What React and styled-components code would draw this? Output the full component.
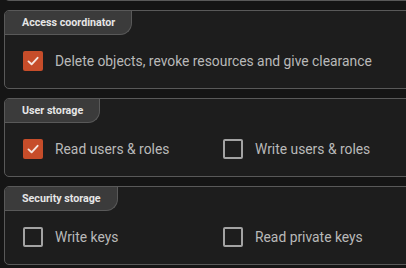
import React from "react";
import styled, { createGlobalStyle } from "styled-components";

const Global = createGlobalStyle`
  html, body {
    margin: 0;
    padding: 0;
    background: #151515;
  }
  body {
    font-family: Roboto, "Noto Sans", sans-serif;
  }
`;

const Page = styled.div`
  display: flex;
  flex-direction: column;
  gap: 9px;
  padding-left: 4px;
  overflow: hidden;
  height: 268px;
`;

const Panel = styled.section`
  width: calc(100% + 20px);
  flex: none;
  background: #1d1d1d;
  border: 1px solid #595959;
  border-radius: 5px;
  height: 77px;
  display: flex;
  flex-direction: column;
  align-items: flex-start;
  margin-top: ${(p) => (p.$hidden ? "-78px" : "0")};
`;

const Tab = styled.div`
  box-sizing: border-box;
  height: 24px;
  display: flex;
  align-items: center;
  padding: 0 16px 0 17px;
  background: #3b3b3b;
  border-right: 1px solid #595959;
  border-bottom: 1px solid #595959;
  border-top-left-radius: 4px;
  border-bottom-right-radius: 12px;
  color: #e6e6e6;
  font-size: 10.7px;
  font-weight: 700;
`;

const Options = styled.div`
  display: grid;
  grid-template-columns: repeat(${(p) => p.$cols}, 200px);
  padding: 16px 0 0 18px;
`;

const Option = styled.label`
  display: flex;
  align-items: center;
  gap: 12px;
  height: 20px;
  color: #b9b9b9;
  font-size: 13.85px;
  white-space: nowrap;
`;

const Box = styled.span`
  box-sizing: border-box;
  width: 20px;
  height: 20px;
  flex: none;
  display: flex;
  align-items: center;
  justify-content: center;
  border-radius: 2px;
  background: ${(p) => (p.$checked ? "#c64d2a" : "transparent")};
  border: ${(p) => (p.$checked ? "none" : "2px solid #a3a3a3")};
`;

const Check = ({ checked }) => (
  <Box $checked={checked}>
    {checked && (
      <svg width="14" height="14" viewBox="0 0 14 14">
        <path
          d="M2.5 7.4 L5.6 10.3 L11.6 3.8"
          fill="none"
          stroke="#f4e6e0"
          strokeWidth="1.9"
          strokeLinecap="round"
          strokeLinejoin="round"
        />
      </svg>
    )}
  </Box>
);

const groups = [
  {
    title: "Access coordinator",
    items: [{ label: "Delete objects, revoke resources and give clearance", checked: true }],
  },
  {
    title: "User storage",
    items: [
      { label: "Read users & roles", checked: true },
      { label: "Write users & roles", checked: false },
    ],
  },
  {
    title: "Security storage",
    items: [
      { label: "Write keys", checked: false },
      { label: "Read private keys", checked: false },
    ],
  },
];

export default function App() {
  return (
    <>
      <Global />
      <Page>
        <Panel $hidden />
        {groups.map((g) => (
          <Panel key={g.title}>
            <Tab>{g.title}</Tab>
            <Options $cols={g.items.length}>
              {g.items.map((it) => (
                <Option key={it.label}>
                  <Check checked={it.checked} />
                  {it.label}
                </Option>
              ))}
            </Options>
          </Panel>
        ))}
      </Page>
    </>
  );
}
